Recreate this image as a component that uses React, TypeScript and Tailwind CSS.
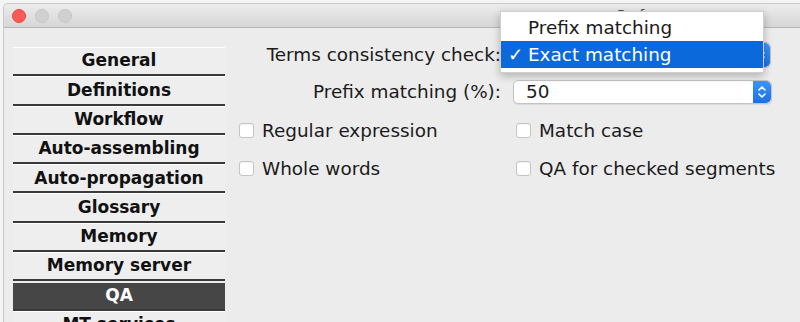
const sections = [
  "General",
  "Definitions",
  "Workflow",
  "Auto-assembling",
  "Auto-propagation",
  "Glossary",
  "Memory",
  "Memory server",
  "QA",
  "MT services",
];

function Stepper() {
  return (
    <div className="flex h-full w-[18px] items-center justify-center rounded-r-[5px] bg-gradient-to-b from-[#3d95f7] to-[#1a6fe8]">
      <svg width="10" height="16" viewBox="0 0 10 16" fill="none">
        <path d="M2 6l3-3 3 3M2 10l3 3 3-3" stroke="white" strokeWidth="1.6" strokeLinecap="round" strokeLinejoin="round" />
      </svg>
    </div>
  );
}

function CheckRow({ label }: { label: string }) {
  return (
    <label className="flex items-center gap-[8px]">
      <span className="h-[15px] w-[15px] rounded-[3px] border border-[#c4c4c4] bg-white shadow-[inset_0_1px_1px_rgba(0,0,0,0.05)]" />
      <span>{label}</span>
    </label>
  );
}

export default function App() {
  return (
    <div className="relative h-[322px] w-[800px] overflow-hidden bg-[#f4f4f4] font-['DejaVu_Sans',sans-serif] text-[18.4px] text-[#1b1b1b]">
      <div className="ml-[3px] mt-[3px] h-[319px] overflow-hidden rounded-tl-[5px] border-l border-t border-[#c9c9c9] bg-[#ececec]">
        {/* Title bar */}
        <div className="flex h-[24px] items-center gap-[9px] border-b border-[#b5b5b5] bg-gradient-to-b from-[#ececec] to-[#d6d6d6] pl-[8px]">
          <span className="h-[14px] w-[14px] rounded-full border border-[#e2463f] bg-[#fc5b57]" />
          <span className="h-[14px] w-[14px] rounded-full border border-[#c6c6c6] bg-[#d0d0d0]" />
          <span className="h-[14px] w-[14px] rounded-full border border-[#c6c6c6] bg-[#d0d0d0]" />
          <span className="ml-[536px] text-[14px] text-[#4d4d4d]">Preferences</span>
        </div>

        <div className="flex">
          {/* Sidebar */}
          <div className="ml-[9px] mt-[19px] flex w-[212px] flex-col">
            {sections.map((s) => (
              <div
                key={s}
                className={
                  s === "QA"
                    ? "flex h-[29.3px] items-center justify-center border-b-2 border-t-2 border-b-[#3a3a3a] border-t-[#ececec] bg-[#464646] text-[17px] font-bold text-white"
                    : "flex h-[29.3px] items-center justify-center border-b-2 border-t border-b-[#3a3a3a] border-t-white bg-[#eeeeee] text-[17px] font-bold text-[#111]"
                }
              >
                {s}
              </div>
            ))}
          </div>

          {/* Settings panel */}
          <div className="ml-[14px] flex flex-1 flex-col pt-[13px]">
            <div className="flex h-[28px] items-center">
              <span className="w-[262px] whitespace-nowrap text-right">Terms consistency check:</span>
              <div className="ml-[4px] flex h-[26px] w-[266px] items-stretch justify-end rounded-[5px] border border-[#c0c0c0] bg-white">
                <Stepper />
              </div>
            </div>
            <div className="mt-[10px] flex h-[25px] items-center">
              <span className="w-[262px] whitespace-nowrap text-right">Prefix matching (%):</span>
              <div className="ml-[12px] flex h-[24px] w-[259px] items-stretch rounded-[5px] border border-[#c3c3c3] bg-white shadow-[0_1px_1px_rgba(0,0,0,0.08)]">
                <span className="flex flex-1 items-center pl-[12px]">50</span>
                <Stepper />
              </div>
            </div>
            <div className="mt-[13px] grid grid-cols-[277px_1fr] gap-y-[10px]">
              <CheckRow label="Regular expression" />
              <CheckRow label="Match case" />
              <CheckRow label="Whole words" />
              <CheckRow label="QA for checked segments" />
            </div>
          </div>
        </div>
      </div>

      {/* Open combo popup */}
      <div className="absolute left-[500px] top-[11px] w-[264px] border border-[#cfcfcf] bg-white pb-[4px] pt-[3px] shadow-[0_3px_8px_rgba(0,0,0,0.25)]">
        <div className="flex h-[26px] items-center pl-[27px] text-[#1b1b1b]">Prefix matching</div>
        <div className="flex h-[27px] items-center bg-[#0c69dc] pl-[7px] text-white">
          <span className="w-[20px]">✓</span>
          <span>Exact matching</span>
        </div>
      </div>
    </div>
  );
}
